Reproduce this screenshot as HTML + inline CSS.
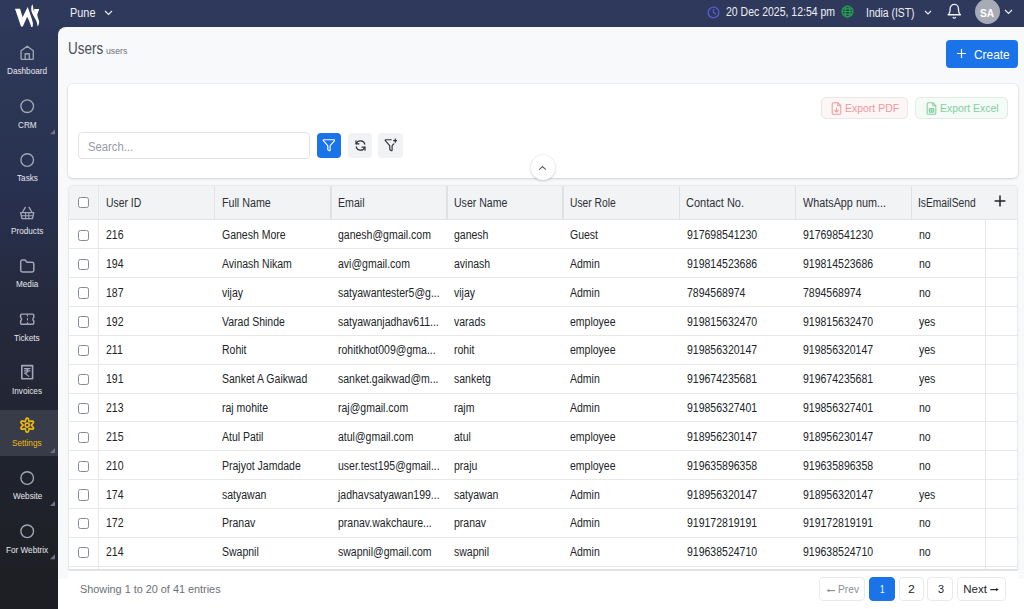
<!DOCTYPE html>
<html><head><meta charset="utf-8">
<style>
*{box-sizing:border-box;margin:0;padding:0}
html,body{width:1024px;height:609px;overflow:hidden}
body{position:relative;font-family:"Liberation Sans",sans-serif;background:#2f3a5e;color:#212529}
#side{position:absolute;left:0;top:0;width:58px;height:609px;background:linear-gradient(180deg,#2e395c 0px,#2c3655 86px,#283150 185px,#252a3e 295px,#222634 400px,#1d1f24 580px,#1c1e23 609px)}
#top{position:absolute;left:0;top:0;width:1024px;height:27px;background:#2e395c}
#main{position:absolute;left:58px;top:27px;width:966px;height:582px;background:#f8f9fb;border-top-left-radius:8px;overflow:hidden}
.nav{position:absolute;left:0;width:58px}
.nav svg{position:absolute;left:20.5px}
.tri{position:absolute;left:51px;width:0;height:0;border-left:4.5px solid transparent;border-bottom:4.5px solid #7f8494}
.t{position:absolute;white-space:nowrap;line-height:1;transform-origin:0 0}
.btn{position:absolute;border-radius:4px}
#card{position:absolute;left:10px;top:56.5px;width:950px;height:94.5px;background:#fff;border-radius:5px;box-shadow:0 0 0 1px rgba(0,0,0,.035),0 1px 3px rgba(0,0,0,.12)}
#tbl{position:absolute;left:10.4px;top:158.2px;width:949.5px;height:386px;background:#fff;border:1px solid #e9eaec;border-bottom:2px solid #e2e3e5;box-shadow:0 0 2px rgba(0,0,0,.05);border-radius:5px 5px 0 0;overflow:hidden}
.thead{position:absolute;left:0;top:0;width:100%;background:#f2f3f5;border-bottom:1px solid #e1e3e6}
.hdiv{position:absolute;top:0;width:1.5px;height:34px;background:#dfe1e5}
.vline{position:absolute;top:34px;width:1.2px;height:360px;background:#e7e8ea}
.tr{position:absolute;left:0;width:100%;border-bottom:1px solid #e7e8ea}
.cb{position:absolute;width:11px;height:11.2px;border:1px solid #878a95;border-radius:2.5px;background:#fff}
.plus{position:absolute}
#foot{position:absolute;left:0;top:551.5px;width:966px;height:31px;background:#fff}
.pg{position:absolute;top:550.3px;height:23.4px;border:1px solid #e9eaed;border-radius:4px;background:#fff}
</style></head><body>
<div id="side"></div>
<div id="top"></div>
<svg style="position:absolute;left:0;top:0" width="58" height="27" viewBox="0 0 58 27">
<path fill="#fff" d="M15 8.7L20.05 8.7L22.6 17.2L27.65 7.06C29.5 11.8 31.6 17.5 32.9 23L32.7 26.85L31.3 27.1C30.3 23.5 28.8 19.8 27.2 16.7L22.8 26.4L21 26.4Z"/>
<path fill="#fff" d="M32.25 4.3C32.9 5.6 33.2 7.5 33.4 9.2L34.2 12.2L34.1 8.9L39.15 8.9C38.9 10.6 38 12.3 37.3 14.2C37.2 16.5 38.6 18.7 39.1 21.2C39.3 23.2 38.6 25.2 37.5 26.4C37.4 24.6 37.1 22.6 36.2 20.8C35 18.5 33.4 16 32.2 13.2C31 10.8 30.7 7 32.25 4.3Z"/>
</svg>
<svg style="position:absolute;left:104px;top:9.5px" width="9" height="6" viewBox="0 0 9 6"><path d="M1 1l3.5 3.5L8 1" fill="none" stroke="#e8eaf0" stroke-width="1.2"/></svg>
<svg style="position:absolute;left:707px;top:5.6px" width="13" height="13" viewBox="0 0 13 13"><circle cx="6.5" cy="6.5" r="5.4" fill="none" stroke="#5b5bd6" stroke-width="1.3"/><path d="M6.5 3.6v3.1l2 1.2" fill="none" stroke="#5b5bd6" stroke-width="1.3" stroke-linecap="round"/></svg>
<svg style="position:absolute;left:840.7px;top:5.2px" width="13" height="13" viewBox="0 0 13 13" fill="none" stroke="#22a34a" stroke-width="1.2"><circle cx="6.5" cy="6.5" r="5.5"/><ellipse cx="6.5" cy="6.5" rx="2.4" ry="5.5"/><path d="M1 6.5h11M1.8 3.8h9.4M1.8 9.2h9.4"/></svg>
<svg style="position:absolute;left:924px;top:9.5px" width="8" height="6" viewBox="0 0 8 6"><path d="M1 1l3 3 3-3" fill="none" stroke="#e8eaf0" stroke-width="1.2"/></svg>
<svg style="position:absolute;left:946.3px;top:2.9px" width="16.6" height="16.6" viewBox="0 0 24 24" fill="none" stroke="#f0f2f6" stroke-width="1.9" stroke-linecap="round" stroke-linejoin="round"><path d="M6 8a6 6 0 0 1 12 0c0 7 3 9 3 9H3s3-2 3-9"/><path d="M10.3 21a1.94 1.94 0 0 0 3.4 0"/></svg>
<div style="position:absolute;left:974.9px;top:-0.8px;width:25px;height:25px;border-radius:50%;background:#a7abb5"></div>
<svg style="position:absolute;left:1004.3px;top:9px" width="9" height="6" viewBox="0 0 9 6"><path d="M1 1l3.5 3.5L8 1" fill="none" stroke="#e8eaf0" stroke-width="1.2"/></svg>

<div class="nav" style="top:410.0px;height:46px;background:#383c48"></div>
<svg style="position:absolute;left:0;top:0" width="58" height="609" fill="none" stroke-linecap="round" stroke-linejoin="round" stroke-width="1.35"><g stroke="#a2a7b6"><path d="M21.10 50.80 L27.20 46.30 L33.30 50.80 V58.40 Q33.30 59.40 32.30 59.40 H22.10 Q21.10 59.40 21.10 58.40 Z M25.20 59.40 V53.70 H29.30 V59.40"/></g><g stroke="#a2a7b6"><circle cx="27.20" cy="106.20" r="6.3"/></g><path d="M50 134.20 H55 V129.20 Z" fill="#6e7387" stroke="none"/><g stroke="#a2a7b6"><circle cx="27.20" cy="160.00" r="6.3"/></g><g stroke="#a2a7b6"><path d="M25.30 207.40 L22.60 212.00 M29.10 207.40 L31.80 212.00"/><path d="M20.60 212.60 H33.80 L32.40 218.60 H22.00 Z"/><path d="M21.40 215.70 H33.00 M25.60 212.60 V218.60 M28.80 212.60 V218.60" stroke-width="1.1"/></g><g stroke="#a2a7b6"><path d="M20.70 261.60 a1.6 1.6 0 0 1 1.6-1.6 H25.20 L26.90 262.30 H32.20 a1.6 1.6 0 0 1 1.6 1.6 V270.30 a1.6 1.6 0 0 1 -1.6 1.6 H22.30 a1.6 1.6 0 0 1 -1.6 -1.6 Z" stroke-width="1.5"/></g><g stroke="#a2a7b6"><path d="M20.60 315.40 a1.3 1.3 0 0 1 1.3-1.3 H32.50 a1.3 1.3 0 0 1 1.3 1.3 V317.50 a2 2 0 0 0 0 3.4 V323.00 a1.3 1.3 0 0 1 -1.3 1.3 H21.90 a1.3 1.3 0 0 1 -1.3 -1.3 V320.90 a2 2 0 0 0 0 -3.4 Z" stroke-width="1.45"/><path d="M27.50 314.80 V315.90 M27.50 318.50 V320.00 M27.50 322.50 V323.60" stroke-width="1.2"/></g><g stroke="#a2a7b6"><path d="M21.80 365.60 H32.60 V378.80 H21.80 Z" stroke-width="1.6"/><path d="M24.40 368.60 H30.00 M24.40 370.80 H30.00 M24.60 368.60 C28.80 368.60 28.80 373.00 24.60 373.00 L28.80 376.40" stroke-width="1.2"/></g><g stroke="#eeb914"><path d="M27.20 418.00 L27.57 418.08 L27.91 418.32 L28.21 418.70 L28.46 419.17 L28.65 419.69 L28.79 420.21 L28.89 420.70 L28.98 421.09 L29.09 421.38 L29.25 421.55 L29.47 421.60 L29.78 421.55 L30.17 421.43 L30.64 421.28 L31.16 421.14 L31.71 421.04 L32.24 421.02 L32.71 421.10 L33.09 421.27 L33.35 421.55 L33.46 421.91 L33.42 422.33 L33.25 422.78 L32.97 423.23 L32.61 423.65 L32.22 424.03 L31.86 424.36 L31.56 424.64 L31.37 424.88 L31.30 425.10 L31.37 425.32 L31.56 425.56 L31.86 425.84 L32.22 426.17 L32.61 426.55 L32.97 426.97 L33.25 427.42 L33.42 427.87 L33.46 428.29 L33.35 428.65 L33.09 428.93 L32.71 429.10 L32.24 429.18 L31.71 429.16 L31.16 429.06 L30.64 428.92 L30.17 428.77 L29.78 428.65 L29.47 428.60 L29.25 428.65 L29.09 428.82 L28.98 429.11 L28.89 429.50 L28.79 429.99 L28.65 430.51 L28.46 431.03 L28.21 431.50 L27.91 431.88 L27.57 432.12 L27.20 432.20 L26.83 432.12 L26.49 431.88 L26.19 431.50 L25.94 431.03 L25.75 430.51 L25.61 429.99 L25.51 429.50 L25.42 429.11 L25.31 428.82 L25.15 428.65 L24.93 428.60 L24.62 428.65 L24.23 428.77 L23.76 428.92 L23.24 429.06 L22.69 429.16 L22.16 429.18 L21.69 429.10 L21.31 428.93 L21.05 428.65 L20.94 428.29 L20.98 427.87 L21.15 427.42 L21.43 426.97 L21.79 426.55 L22.18 426.17 L22.54 425.84 L22.84 425.56 L23.03 425.32 L23.10 425.10 L23.03 424.88 L22.84 424.64 L22.54 424.36 L22.18 424.03 L21.79 423.65 L21.43 423.23 L21.15 422.78 L20.98 422.33 L20.94 421.91 L21.05 421.55 L21.31 421.27 L21.69 421.10 L22.16 421.02 L22.69 421.04 L23.24 421.14 L23.76 421.28 L24.23 421.43 L24.62 421.55 L24.93 421.60 L25.15 421.55 L25.31 421.38 L25.42 421.09 L25.51 420.70 L25.61 420.21 L25.75 419.69 L25.94 419.17 L26.19 418.70 L26.49 418.32 L26.83 418.08 Z" stroke-width="1.7"/><circle cx="27.20" cy="425.10" r="2.0" stroke-width="1.6"/></g><path d="M50 453.10 H55 V448.10 Z" fill="#6e7387" stroke="none"/><g stroke="#a2a7b6"><circle cx="27.20" cy="478.00" r="6.3"/></g><path d="M50 506.00 H55 V501.00 Z" fill="#6e7387" stroke="none"/><g stroke="#a2a7b6"><circle cx="27.20" cy="531.30" r="6.3"/></g><path d="M50 559.30 H55 V554.30 Z" fill="#6e7387" stroke="none"/></svg>

<div id="main">
  <div class="btn" style="left:888px;top:13px;width:72px;height:28px;background:#1a73e8"></div>
  <svg style="position:absolute;left:899px;top:22px" width="9" height="9" viewBox="0 0 9 9"><path d="M4.5 0v9M0 4.5h9" stroke="#fff" stroke-width="1.2"/></svg>

  <div id="card">
    <div class="btn" style="left:752.6px;top:13.6px;width:87.6px;height:22.2px;background:#fdf6f6;border:1px solid #ebe6e8;border-radius:5px"></div>
    <div class="btn" style="left:847.3px;top:13.4px;width:92.5px;height:22.2px;background:#f5fbf7;border:1px solid #e3ebe6;border-radius:5px"></div>
    <svg style="position:absolute;left:763px;top:18.5px" width="11" height="13" viewBox="0 0 11 13" fill="none" stroke="#f09ba0" stroke-width="1.1" stroke-linejoin="round"><path d="M1.2 2a1.3 1.3 0 0 1 1.3-1.3h4.3l3 3v7.3a1.3 1.3 0 0 1-1.3 1.3H2.5a1.3 1.3 0 0 1-1.3-1.3z"/><path d="M6.8 0.8v2.9h2.9"/><path d="M5.5 6v4M3.7 8.3 5.5 10l1.8-1.7" stroke-linecap="round"/></svg>
    <svg style="position:absolute;left:858px;top:18.3px" width="11" height="13" viewBox="0 0 11 13" fill="none" stroke="#86cfa1" stroke-width="1.1" stroke-linejoin="round"><path d="M1.2 2a1.3 1.3 0 0 1 1.3-1.3h4.3l3 3v7.3a1.3 1.3 0 0 1-1.3 1.3H2.5a1.3 1.3 0 0 1-1.3-1.3z"/><path d="M6.8 0.8v2.9h2.9"/><path d="M3.3 6.5h4.4v3.6H3.3zM3.3 8.3h4.4M5.5 6.5v3.6"/></svg>
    <div style="position:absolute;left:10.4px;top:48.8px;width:231.2px;height:26.3px;border:1px solid #e0e2e6;border-radius:4px;background:#fff"></div>
    <div class="btn" style="left:249px;top:49.5px;width:24px;height:25px;background:#1a73e8"></div>
    <svg style="position:absolute;left:253.6px;top:54.8px" width="13.9" height="13.9" viewBox="0 0 24 24" fill="none" stroke="#fff" stroke-width="2" stroke-linecap="round" stroke-linejoin="round"><path d="M10 20a1 1 0 0 0 .553.895l2 1A1 1 0 0 0 14 21v-7a2 2 0 0 1 .517-1.341L21.74 4.67A1 1 0 0 0 21 3H3a1 1 0 0 0-.742 1.67l7.225 7.989A2 2 0 0 1 10 14z"/></svg>
    <div class="btn" style="left:279.8px;top:49.5px;width:24.4px;height:25px;background:#f1f2f4"></div>
    <svg style="position:absolute;left:285.5px;top:55.5px" width="13" height="13" viewBox="0 0 13 13" fill="none" stroke="#2b2f36" stroke-width="1.2" stroke-linecap="round"><path d="M10.8 5.2A4.5 4.5 0 0 0 2.3 4.6M2.2 7.8a4.5 4.5 0 0 0 8.5.6"/><path d="M2 1.8v3h3M11 11.2v-3H8"/></svg>
    <div class="btn" style="left:310.2px;top:49.5px;width:24.8px;height:25px;background:#f1f2f4"></div>
    <svg style="position:absolute;left:315.6px;top:54.8px" width="13.9" height="13.9" viewBox="0 0 24 24" fill="none" stroke="#2b2f36" stroke-width="2" stroke-linecap="round" stroke-linejoin="round"><path d="M12.5 3H3a1 1 0 0 0-.742 1.67l7.225 7.989A2 2 0 0 1 10 14v6a1 1 0 0 0 .553.895l2 1A1 1 0 0 0 14 21v-7a2 2 0 0 1 .517-1.341L17 10"/><path d="M19.5 1.5v6M16.5 4.5h6"/></svg>
  </div>
  <div style="position:absolute;left:472.6px;top:128.4px;width:24.6px;height:24.6px;border-radius:50%;background:#fff;box-shadow:0 0 0 .6px rgba(0,0,0,.06),0 1px 3px rgba(0,0,0,.16)"></div>
  <svg style="position:absolute;left:480.3px;top:137.6px" width="9" height="6" viewBox="0 0 9 6"><path d="M1.2 4.6 4.5 1.5l3.3 3.1" fill="none" stroke="#5f646b" stroke-width="1.2"/></svg>

  <div id="tbl">
<div class="thead" style="height:34.30px"></div>
<div class="cb" style="left:8.6px;top:10.7px"></div>
<div class="hdiv" style="left:144.55px"></div>
<div class="hdiv" style="left:260.70px"></div>
<div class="hdiv" style="left:376.85px"></div>
<div class="hdiv" style="left:493.00px"></div>
<div class="hdiv" style="left:609.15px"></div>
<div class="hdiv" style="left:725.30px"></div>
<div class="hdiv" style="left:841.45px"></div>
<svg class="plus" width="12" height="12" viewBox="0 0 12 12" style="left:924.5px;top:8.9px"><path d="M6 0.6v10.8M0.6 6h10.8" stroke="#1f2328" stroke-width="1.5"/></svg>
<div class="vline" style="left:28.90px;top:0;height:400px"></div>
<div class="vline" style="left:915.90px"></div>
<div class="tr" style="top:34.30px;height:28.85px"></div>
<div class="cb" style="left:8.6px;top:43.60px"></div>
<div class="tr" style="top:63.15px;height:28.85px"></div>
<div class="cb" style="left:8.6px;top:72.45px"></div>
<div class="tr" style="top:92.00px;height:28.85px"></div>
<div class="cb" style="left:8.6px;top:101.30px"></div>
<div class="tr" style="top:120.85px;height:28.85px"></div>
<div class="cb" style="left:8.6px;top:130.15px"></div>
<div class="tr" style="top:149.70px;height:28.85px"></div>
<div class="cb" style="left:8.6px;top:159.00px"></div>
<div class="tr" style="top:178.55px;height:28.85px"></div>
<div class="cb" style="left:8.6px;top:187.85px"></div>
<div class="tr" style="top:207.40px;height:28.85px"></div>
<div class="cb" style="left:8.6px;top:216.70px"></div>
<div class="tr" style="top:236.25px;height:28.85px"></div>
<div class="cb" style="left:8.6px;top:245.55px"></div>
<div class="tr" style="top:265.10px;height:28.85px"></div>
<div class="cb" style="left:8.6px;top:274.40px"></div>
<div class="tr" style="top:293.95px;height:28.85px"></div>
<div class="cb" style="left:8.6px;top:303.25px"></div>
<div class="tr" style="top:322.80px;height:28.85px"></div>
<div class="cb" style="left:8.6px;top:332.10px"></div>
<div class="tr" style="top:351.65px;height:28.85px"></div>
<div class="cb" style="left:8.6px;top:360.95px"></div>
  </div>
  <div id="foot"></div>
  <div style="position:absolute;left:10.4px;top:544.2px;width:949.5px;height:8px;background:#fff"></div>
  <div class="pg" style="left:761.2px;width:46.2px"></div>
  <div class="pg" style="left:811px;width:25.5px;background:#1a73e8;border-color:#1a73e8"></div>
  <div class="pg" style="left:840.6px;width:25.2px"></div>
  <div class="pg" style="left:869.3px;width:25.8px"></div>
  <div class="pg" style="left:899.3px;width:48.6px"></div>
</div>
<div class="t" style="left:70.01px;top:7.00px;font-size:12.2px;color:#eef0f5;transform:scaleX(0.8944);">Pune</div>
<div class="t" style="left:726.16px;top:6.00px;font-size:12px;color:#eef0f5;transform:scaleX(0.8745);">20 Dec 2025, 12:54 pm</div>
<div class="t" style="left:865.83px;top:7.00px;font-size:12px;color:#eef0f5;transform:scaleX(0.8664);">India (IST)</div>
<div class="t" style="left:980.28px;top:8.00px;font-size:11.5px;color:#ffffff;font-weight:bold;transform:scaleX(0.8903);">SA</div>
<div class="t" style="left:7.09px;top:67.00px;font-size:8.8px;color:#e6e8ee;transform:scaleX(0.9300);">Dashboard</div>
<div class="t" style="left:18.02px;top:121.00px;font-size:8.8px;color:#e6e8ee;transform:scaleX(0.9300);">CRM</div>
<div class="t" style="left:16.74px;top:174.00px;font-size:8.8px;color:#e6e8ee;transform:scaleX(0.9300);">Tasks</div>
<div class="t" style="left:10.81px;top:227.00px;font-size:8.8px;color:#e6e8ee;transform:scaleX(0.9300);">Products</div>
<div class="t" style="left:15.69px;top:280.00px;font-size:8.8px;color:#e6e8ee;transform:scaleX(0.9300);">Media</div>
<div class="t" style="left:14.41px;top:334.00px;font-size:8.8px;color:#e6e8ee;transform:scaleX(0.9300);">Tickets</div>
<div class="t" style="left:11.97px;top:387.00px;font-size:8.8px;color:#e6e8ee;transform:scaleX(0.9300);">Invoices</div>
<div class="t" style="left:12.32px;top:439.00px;font-size:8.8px;color:#f0b90b;transform:scaleX(0.9300);">Settings</div>
<div class="t" style="left:12.67px;top:492.00px;font-size:8.8px;color:#e6e8ee;transform:scaleX(0.9300);">Website</div>
<div class="t" style="left:5.81px;top:546.00px;font-size:8.8px;color:#e6e8ee;transform:scaleX(0.9300);">For Webtrix</div>
<div class="t" style="left:67.88px;top:40.00px;font-size:16.5px;color:#4a4f57;transform:scaleX(0.8170);">Users</div>
<div class="t" style="left:106.22px;top:47.00px;font-size:9px;color:#6c717a;transform:scaleX(0.9647);">users</div>
<div class="t" style="left:973.80px;top:49.00px;font-size:12px;color:#ffffff;transform:scaleX(0.9914);">Create</div>
<div class="t" style="left:845.11px;top:103.00px;font-size:11.8px;color:#f0979c;transform:scaleX(0.8874);">Export PDF</div>
<div class="t" style="left:940.41px;top:103.00px;font-size:11.8px;color:#84ce9f;transform:scaleX(0.8853);">Export Excel</div>
<div class="t" style="left:87.85px;top:141.00px;font-size:12.5px;color:#959ba3;transform:scaleX(0.9010);">Search...</div>
<div class="t" style="left:79.72px;top:584.00px;font-size:11.4px;color:#6a7078;transform:scaleX(0.9526);">Showing 1 to 20 of 41 entries</div>
<div class="t" style="left:837.91px;top:584.00px;font-size:11.5px;color:#8a9099;transform:scaleX(0.8889);">Prev</div>
<div class="t" style="left:879.87px;top:584.00px;font-size:11.5px;color:#ffffff;transform:scaleX(0.7048);">1</div>
<div class="t" style="left:908.27px;top:584.00px;font-size:11.5px;color:#212529;transform:scaleX(1.0667);">2</div>
<div class="t" style="left:937.63px;top:584.00px;font-size:11.5px;color:#212529;transform:scaleX(0.9455);">3</div>
<div class="t" style="left:963.30px;top:584.00px;font-size:11.5px;color:#212529;transform:scaleX(1.0000);">Next</div>
<div class="t" style="left:105.53px;top:197.00px;font-size:12px;color:#2b2f36;transform:scaleX(0.8662);">User ID</div>
<div class="t" style="left:221.51px;top:197.00px;font-size:12px;color:#2b2f36;transform:scaleX(0.8920);">Full Name</div>
<div class="t" style="left:337.62px;top:197.00px;font-size:12px;color:#2b2f36;transform:scaleX(0.8850);">Email</div>
<div class="t" style="left:454.02px;top:197.00px;font-size:12px;color:#2b2f36;transform:scaleX(0.8793);">User Name</div>
<div class="t" style="left:570.04px;top:197.00px;font-size:12px;color:#2b2f36;transform:scaleX(0.8558);">User Role</div>
<div class="t" style="left:686.34px;top:197.00px;font-size:12px;color:#2b2f36;transform:scaleX(0.9150);">Contact No.</div>
<div class="t" style="left:803.00px;top:197.00px;font-size:12px;color:#2b2f36;transform:scaleX(0.9011);">WhatsApp num...</div>
<div class="t" style="left:918.45px;top:197.00px;font-size:12px;color:#2b2f36;transform:scaleX(0.8548);">IsEmailSend</div>
<div class="t" style="left:105.80px;top:229.00px;font-size:12px;color:#212529;transform:scaleX(0.8750);">216</div>
<div class="t" style="left:221.95px;top:229.00px;font-size:12px;color:#212529;transform:scaleX(0.8750);">Ganesh More</div>
<div class="t" style="left:338.10px;top:229.00px;font-size:12px;color:#212529;transform:scaleX(0.8750);">ganesh@gmail.com</div>
<div class="t" style="left:454.25px;top:229.00px;font-size:12px;color:#212529;transform:scaleX(0.8750);">ganesh</div>
<div class="t" style="left:570.40px;top:229.00px;font-size:12px;color:#212529;transform:scaleX(0.8750);">Guest</div>
<div class="t" style="left:686.55px;top:229.00px;font-size:12px;color:#212529;transform:scaleX(0.8750);">917698541230</div>
<div class="t" style="left:802.70px;top:229.00px;font-size:12px;color:#212529;transform:scaleX(0.8750);">917698541230</div>
<div class="t" style="left:918.85px;top:229.00px;font-size:12px;color:#212529;transform:scaleX(0.8750);">no</div>
<div class="t" style="left:105.80px;top:258.00px;font-size:12px;color:#212529;transform:scaleX(0.8750);">194</div>
<div class="t" style="left:221.95px;top:258.00px;font-size:12px;color:#212529;transform:scaleX(0.8750);">Avinash Nikam</div>
<div class="t" style="left:338.10px;top:258.00px;font-size:12px;color:#212529;transform:scaleX(0.8750);">avi@gmail.com</div>
<div class="t" style="left:454.25px;top:258.00px;font-size:12px;color:#212529;transform:scaleX(0.8750);">avinash</div>
<div class="t" style="left:570.40px;top:258.00px;font-size:12px;color:#212529;transform:scaleX(0.8750);">Admin</div>
<div class="t" style="left:686.55px;top:258.00px;font-size:12px;color:#212529;transform:scaleX(0.8750);">919814523686</div>
<div class="t" style="left:802.70px;top:258.00px;font-size:12px;color:#212529;transform:scaleX(0.8750);">919814523686</div>
<div class="t" style="left:918.85px;top:258.00px;font-size:12px;color:#212529;transform:scaleX(0.8750);">no</div>
<div class="t" style="left:105.80px;top:287.00px;font-size:12px;color:#212529;transform:scaleX(0.8750);">187</div>
<div class="t" style="left:221.95px;top:287.00px;font-size:12px;color:#212529;transform:scaleX(0.8750);">vijay</div>
<div class="t" style="left:338.10px;top:287.00px;font-size:12px;color:#212529;transform:scaleX(0.8750);">satyawantester5@g...</div>
<div class="t" style="left:454.25px;top:287.00px;font-size:12px;color:#212529;transform:scaleX(0.8750);">vijay</div>
<div class="t" style="left:570.40px;top:287.00px;font-size:12px;color:#212529;transform:scaleX(0.8750);">Admin</div>
<div class="t" style="left:686.55px;top:287.00px;font-size:12px;color:#212529;transform:scaleX(0.8750);">7894568974</div>
<div class="t" style="left:802.70px;top:287.00px;font-size:12px;color:#212529;transform:scaleX(0.8750);">7894568974</div>
<div class="t" style="left:918.85px;top:287.00px;font-size:12px;color:#212529;transform:scaleX(0.8750);">no</div>
<div class="t" style="left:105.80px;top:316.00px;font-size:12px;color:#212529;transform:scaleX(0.8750);">192</div>
<div class="t" style="left:221.95px;top:316.00px;font-size:12px;color:#212529;transform:scaleX(0.8750);">Varad Shinde</div>
<div class="t" style="left:338.10px;top:316.00px;font-size:12px;color:#212529;transform:scaleX(0.8750);">satyawanjadhav611...</div>
<div class="t" style="left:454.25px;top:316.00px;font-size:12px;color:#212529;transform:scaleX(0.8750);">varads</div>
<div class="t" style="left:570.40px;top:316.00px;font-size:12px;color:#212529;transform:scaleX(0.8750);">employee</div>
<div class="t" style="left:686.55px;top:316.00px;font-size:12px;color:#212529;transform:scaleX(0.8750);">919815632470</div>
<div class="t" style="left:802.70px;top:316.00px;font-size:12px;color:#212529;transform:scaleX(0.8750);">919815632470</div>
<div class="t" style="left:918.85px;top:316.00px;font-size:12px;color:#212529;transform:scaleX(0.8750);">yes</div>
<div class="t" style="left:105.80px;top:344.00px;font-size:12px;color:#212529;transform:scaleX(0.8750);">211</div>
<div class="t" style="left:221.95px;top:344.00px;font-size:12px;color:#212529;transform:scaleX(0.8750);">Rohit</div>
<div class="t" style="left:338.10px;top:344.00px;font-size:12px;color:#212529;transform:scaleX(0.8750);">rohitkhot009@gma...</div>
<div class="t" style="left:454.25px;top:344.00px;font-size:12px;color:#212529;transform:scaleX(0.8750);">rohit</div>
<div class="t" style="left:570.40px;top:344.00px;font-size:12px;color:#212529;transform:scaleX(0.8750);">employee</div>
<div class="t" style="left:686.55px;top:344.00px;font-size:12px;color:#212529;transform:scaleX(0.8750);">919856320147</div>
<div class="t" style="left:802.70px;top:344.00px;font-size:12px;color:#212529;transform:scaleX(0.8750);">919856320147</div>
<div class="t" style="left:918.85px;top:344.00px;font-size:12px;color:#212529;transform:scaleX(0.8750);">yes</div>
<div class="t" style="left:105.80px;top:373.00px;font-size:12px;color:#212529;transform:scaleX(0.8750);">191</div>
<div class="t" style="left:221.95px;top:373.00px;font-size:12px;color:#212529;transform:scaleX(0.8750);">Sanket A Gaikwad</div>
<div class="t" style="left:338.10px;top:373.00px;font-size:12px;color:#212529;transform:scaleX(0.8750);">sanket.gaikwad@m...</div>
<div class="t" style="left:454.25px;top:373.00px;font-size:12px;color:#212529;transform:scaleX(0.8750);">sanketg</div>
<div class="t" style="left:570.40px;top:373.00px;font-size:12px;color:#212529;transform:scaleX(0.8750);">Admin</div>
<div class="t" style="left:686.55px;top:373.00px;font-size:12px;color:#212529;transform:scaleX(0.8750);">919674235681</div>
<div class="t" style="left:802.70px;top:373.00px;font-size:12px;color:#212529;transform:scaleX(0.8750);">919674235681</div>
<div class="t" style="left:918.85px;top:373.00px;font-size:12px;color:#212529;transform:scaleX(0.8750);">yes</div>
<div class="t" style="left:105.80px;top:402.00px;font-size:12px;color:#212529;transform:scaleX(0.8750);">213</div>
<div class="t" style="left:221.95px;top:402.00px;font-size:12px;color:#212529;transform:scaleX(0.8750);">raj mohite</div>
<div class="t" style="left:338.10px;top:402.00px;font-size:12px;color:#212529;transform:scaleX(0.8750);">raj@gmail.com</div>
<div class="t" style="left:454.25px;top:402.00px;font-size:12px;color:#212529;transform:scaleX(0.8750);">rajm</div>
<div class="t" style="left:570.40px;top:402.00px;font-size:12px;color:#212529;transform:scaleX(0.8750);">Admin</div>
<div class="t" style="left:686.55px;top:402.00px;font-size:12px;color:#212529;transform:scaleX(0.8750);">919856327401</div>
<div class="t" style="left:802.70px;top:402.00px;font-size:12px;color:#212529;transform:scaleX(0.8750);">919856327401</div>
<div class="t" style="left:918.85px;top:402.00px;font-size:12px;color:#212529;transform:scaleX(0.8750);">no</div>
<div class="t" style="left:105.80px;top:431.00px;font-size:12px;color:#212529;transform:scaleX(0.8750);">215</div>
<div class="t" style="left:221.95px;top:431.00px;font-size:12px;color:#212529;transform:scaleX(0.8750);">Atul Patil</div>
<div class="t" style="left:338.10px;top:431.00px;font-size:12px;color:#212529;transform:scaleX(0.8750);">atul@gmail.com</div>
<div class="t" style="left:454.25px;top:431.00px;font-size:12px;color:#212529;transform:scaleX(0.8750);">atul</div>
<div class="t" style="left:570.40px;top:431.00px;font-size:12px;color:#212529;transform:scaleX(0.8750);">employee</div>
<div class="t" style="left:686.55px;top:431.00px;font-size:12px;color:#212529;transform:scaleX(0.8750);">918956230147</div>
<div class="t" style="left:802.70px;top:431.00px;font-size:12px;color:#212529;transform:scaleX(0.8750);">918956230147</div>
<div class="t" style="left:918.85px;top:431.00px;font-size:12px;color:#212529;transform:scaleX(0.8750);">no</div>
<div class="t" style="left:105.80px;top:460.00px;font-size:12px;color:#212529;transform:scaleX(0.8750);">210</div>
<div class="t" style="left:221.95px;top:460.00px;font-size:12px;color:#212529;transform:scaleX(0.8750);">Prajyot Jamdade</div>
<div class="t" style="left:338.10px;top:460.00px;font-size:12px;color:#212529;transform:scaleX(0.8750);">user.test195@gmail...</div>
<div class="t" style="left:454.25px;top:460.00px;font-size:12px;color:#212529;transform:scaleX(0.8750);">praju</div>
<div class="t" style="left:570.40px;top:460.00px;font-size:12px;color:#212529;transform:scaleX(0.8750);">employee</div>
<div class="t" style="left:686.55px;top:460.00px;font-size:12px;color:#212529;transform:scaleX(0.8750);">919635896358</div>
<div class="t" style="left:802.70px;top:460.00px;font-size:12px;color:#212529;transform:scaleX(0.8750);">919635896358</div>
<div class="t" style="left:918.85px;top:460.00px;font-size:12px;color:#212529;transform:scaleX(0.8750);">no</div>
<div class="t" style="left:105.80px;top:489.00px;font-size:12px;color:#212529;transform:scaleX(0.8750);">174</div>
<div class="t" style="left:221.95px;top:489.00px;font-size:12px;color:#212529;transform:scaleX(0.8750);">satyawan</div>
<div class="t" style="left:338.10px;top:489.00px;font-size:12px;color:#212529;transform:scaleX(0.8750);">jadhavsatyawan199...</div>
<div class="t" style="left:454.25px;top:489.00px;font-size:12px;color:#212529;transform:scaleX(0.8750);">satyawan</div>
<div class="t" style="left:570.40px;top:489.00px;font-size:12px;color:#212529;transform:scaleX(0.8750);">Admin</div>
<div class="t" style="left:686.55px;top:489.00px;font-size:12px;color:#212529;transform:scaleX(0.8750);">918956320147</div>
<div class="t" style="left:802.70px;top:489.00px;font-size:12px;color:#212529;transform:scaleX(0.8750);">918956320147</div>
<div class="t" style="left:918.85px;top:489.00px;font-size:12px;color:#212529;transform:scaleX(0.8750);">yes</div>
<div class="t" style="left:105.80px;top:517.00px;font-size:12px;color:#212529;transform:scaleX(0.8750);">172</div>
<div class="t" style="left:221.95px;top:517.00px;font-size:12px;color:#212529;transform:scaleX(0.8750);">Pranav</div>
<div class="t" style="left:338.10px;top:517.00px;font-size:12px;color:#212529;transform:scaleX(0.8750);">pranav.wakchaure...</div>
<div class="t" style="left:454.25px;top:517.00px;font-size:12px;color:#212529;transform:scaleX(0.8750);">pranav</div>
<div class="t" style="left:570.40px;top:517.00px;font-size:12px;color:#212529;transform:scaleX(0.8750);">Admin</div>
<div class="t" style="left:686.55px;top:517.00px;font-size:12px;color:#212529;transform:scaleX(0.8750);">919172819191</div>
<div class="t" style="left:802.70px;top:517.00px;font-size:12px;color:#212529;transform:scaleX(0.8750);">919172819191</div>
<div class="t" style="left:918.85px;top:517.00px;font-size:12px;color:#212529;transform:scaleX(0.8750);">no</div>
<div class="t" style="left:105.80px;top:546.00px;font-size:12px;color:#212529;transform:scaleX(0.8750);">214</div>
<div class="t" style="left:221.95px;top:546.00px;font-size:12px;color:#212529;transform:scaleX(0.8750);">Swapnil</div>
<div class="t" style="left:338.10px;top:546.00px;font-size:12px;color:#212529;transform:scaleX(0.8750);">swapnil@gmail.com</div>
<div class="t" style="left:454.25px;top:546.00px;font-size:12px;color:#212529;transform:scaleX(0.8750);">swapnil</div>
<div class="t" style="left:570.40px;top:546.00px;font-size:12px;color:#212529;transform:scaleX(0.8750);">Admin</div>
<div class="t" style="left:686.55px;top:546.00px;font-size:12px;color:#212529;transform:scaleX(0.8750);">919638524710</div>
<div class="t" style="left:802.70px;top:546.00px;font-size:12px;color:#212529;transform:scaleX(0.8750);">919638524710</div>
<div class="t" style="left:918.85px;top:546.00px;font-size:12px;color:#212529;transform:scaleX(0.8750);">no</div>
<svg style="position:absolute;left:825.5px;top:586.5px" width="10" height="7" viewBox="0 0 10 7"><path d="M9 3.6H1.5" fill="none" stroke="#8a9099" stroke-width="1.1"/><path d="M0.6 3.6 3.4 1.9V5.3Z" fill="#8a9099"/></svg>
<svg style="position:absolute;left:990px;top:586px" width="9" height="7" viewBox="0 0 9 7"><path d="M0.3 3.6H7" fill="none" stroke="#212529" stroke-width="1.2"/><path d="M8.8 3.6 6 1.9V5.3Z" fill="#212529"/></svg>
</body></html>
